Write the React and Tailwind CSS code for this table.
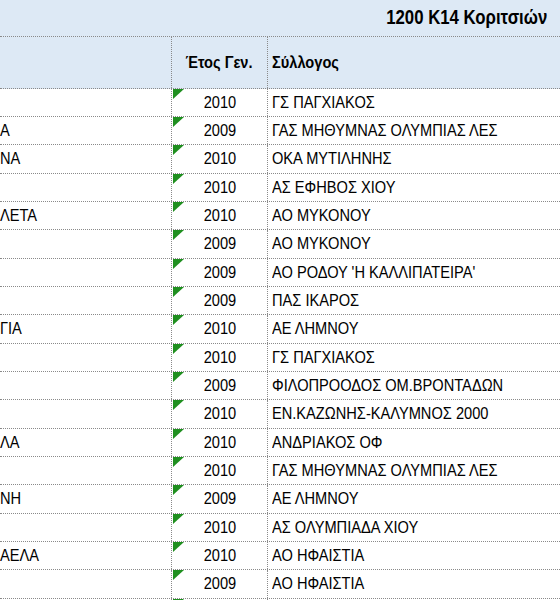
import React from "react";

// rows of the sheet; "tail" is the visible end of the name (the sheet is scrolled right)
const rows = [
  { tail: "", year: "2010", club: "ΓΣ ΠΑΓΧΙΑΚΟΣ" },
  { tail: "Α", year: "2009", club: "ΓΑΣ ΜΗΘΥΜΝΑΣ ΟΛΥΜΠΙΑΣ ΛΕΣ" },
  { tail: "ΝΑ", year: "2010", club: "ΟΚΑ ΜΥΤΙΛΗΝΗΣ" },
  { tail: "", year: "2010", club: "ΑΣ ΕΦΗΒΟΣ ΧΙΟΥ" },
  { tail: "ΛΕΤΑ", year: "2010", club: "ΑΟ ΜΥΚΟΝΟΥ" },
  { tail: "", year: "2009", club: "ΑΟ ΜΥΚΟΝΟΥ" },
  { tail: "", year: "2009", club: "ΑΟ ΡΟΔΟΥ 'Η ΚΑΛΛΙΠΑΤΕΙΡΑ'" },
  { tail: "", year: "2009", club: "ΠΑΣ ΙΚΑΡΟΣ" },
  { tail: "ΓΙΑ", year: "2010", club: "ΑΕ ΛΗΜΝΟΥ" },
  { tail: "", year: "2010", club: "ΓΣ ΠΑΓΧΙΑΚΟΣ" },
  { tail: "", year: "2009", club: "ΦΙΛΟΠΡΟΟΔΟΣ ΟΜ.ΒΡΟΝΤΑΔΩΝ" },
  { tail: "", year: "2010", club: "ΕΝ.ΚΑΖΩΝΗΣ-ΚΑΛΥΜΝΟΣ 2000" },
  { tail: "ΛΑ", year: "2010", club: "ΑΝΔΡΙΑΚΟΣ ΟΦ" },
  { tail: "", year: "2010", club: "ΓΑΣ ΜΗΘΥΜΝΑΣ ΟΛΥΜΠΙΑΣ ΛΕΣ" },
  { tail: "ΝΗ", year: "2009", club: "ΑΕ ΛΗΜΝΟΥ" },
  { tail: "", year: "2010", club: "ΑΣ ΟΛΥΜΠΙΑΔΑ ΧΙΟΥ" },
  { tail: "ΑΕΛΑ", year: "2010", club: "ΑΟ ΗΦΑΙΣΤΙΑ" },
  { tail: "", year: "2009", club: "ΑΟ ΗΦΑΙΣΤΙΑ" },
  // next row only shows its corner flag at the bottom edge
  { tail: "", year: "", club: "" },
];

// spreadsheet rows scale to ~28.33px, so heights go 28, 28, 29
const rowHeights = ["h-[28px]", "h-[28px]", "h-[29px]"];

// the sheet uses a narrow face; no narrow font here, so squeeze the text
function Narrow({ children, origin = "origin-left" }) {
  return <span className={`inline-block whitespace-nowrap scale-x-[0.86] ${origin}`}>{children}</span>;
}

function TextFlag() {
  return (
    <svg className="absolute left-[1px] top-0" width="11" height="10" viewBox="0 0 11 10">
      <polygon points="0,0 11,0 0,10" fill="#1f8f1f" />
    </svg>
  );
}

function Row({ row, i }) {
  return (
    <div className={`grid grid-cols-[172px_96px_1fr] border-b border-dotted border-[#8a8a8a] bg-white ${rowHeights[i % 3]}`}>
      <div className="flex items-center overflow-hidden border-r border-dotted border-[#8a8a8a]">
        <Narrow>{row.tail}</Narrow>
      </div>
      <div className="relative flex items-center justify-center border-r border-dotted border-[#8a8a8a]">
        <TextFlag />
        <Narrow origin="origin-center">{row.year}</Narrow>
      </div>
      <div className="flex items-center pl-[4px]">
        <Narrow>{row.club}</Narrow>
      </div>
    </div>
  );
}

export default function App() {
  return (
    <div className="w-[560px] h-[600px] overflow-hidden bg-white text-[17px] text-black font-['Liberation_Sans',Arial,sans-serif]">
      <div className="flex h-[36px] items-center justify-end bg-[#dde9f5] pr-[13px] text-[19.5px] font-bold">
        <Narrow origin="origin-right">1200 K14 Κοριτσιών</Narrow>
      </div>
      <div className="grid h-[53px] grid-cols-[172px_96px_1fr] border-y border-dotted border-[#8a8a8a] bg-[#dde9f5] font-bold">
        <div className="border-r border-dotted border-[#8a8a8a]" />
        <div className="flex items-center justify-center border-r border-dotted border-[#8a8a8a]">
          <Narrow origin="origin-center">Έτος Γεν.</Narrow>
        </div>
        <div className="flex items-center pl-[4px]">
          <Narrow>Σύλλογος</Narrow>
        </div>
      </div>
      {rows.map((row, i) => (
        <Row key={i} row={row} i={i} />
      ))}
    </div>
  );
}
